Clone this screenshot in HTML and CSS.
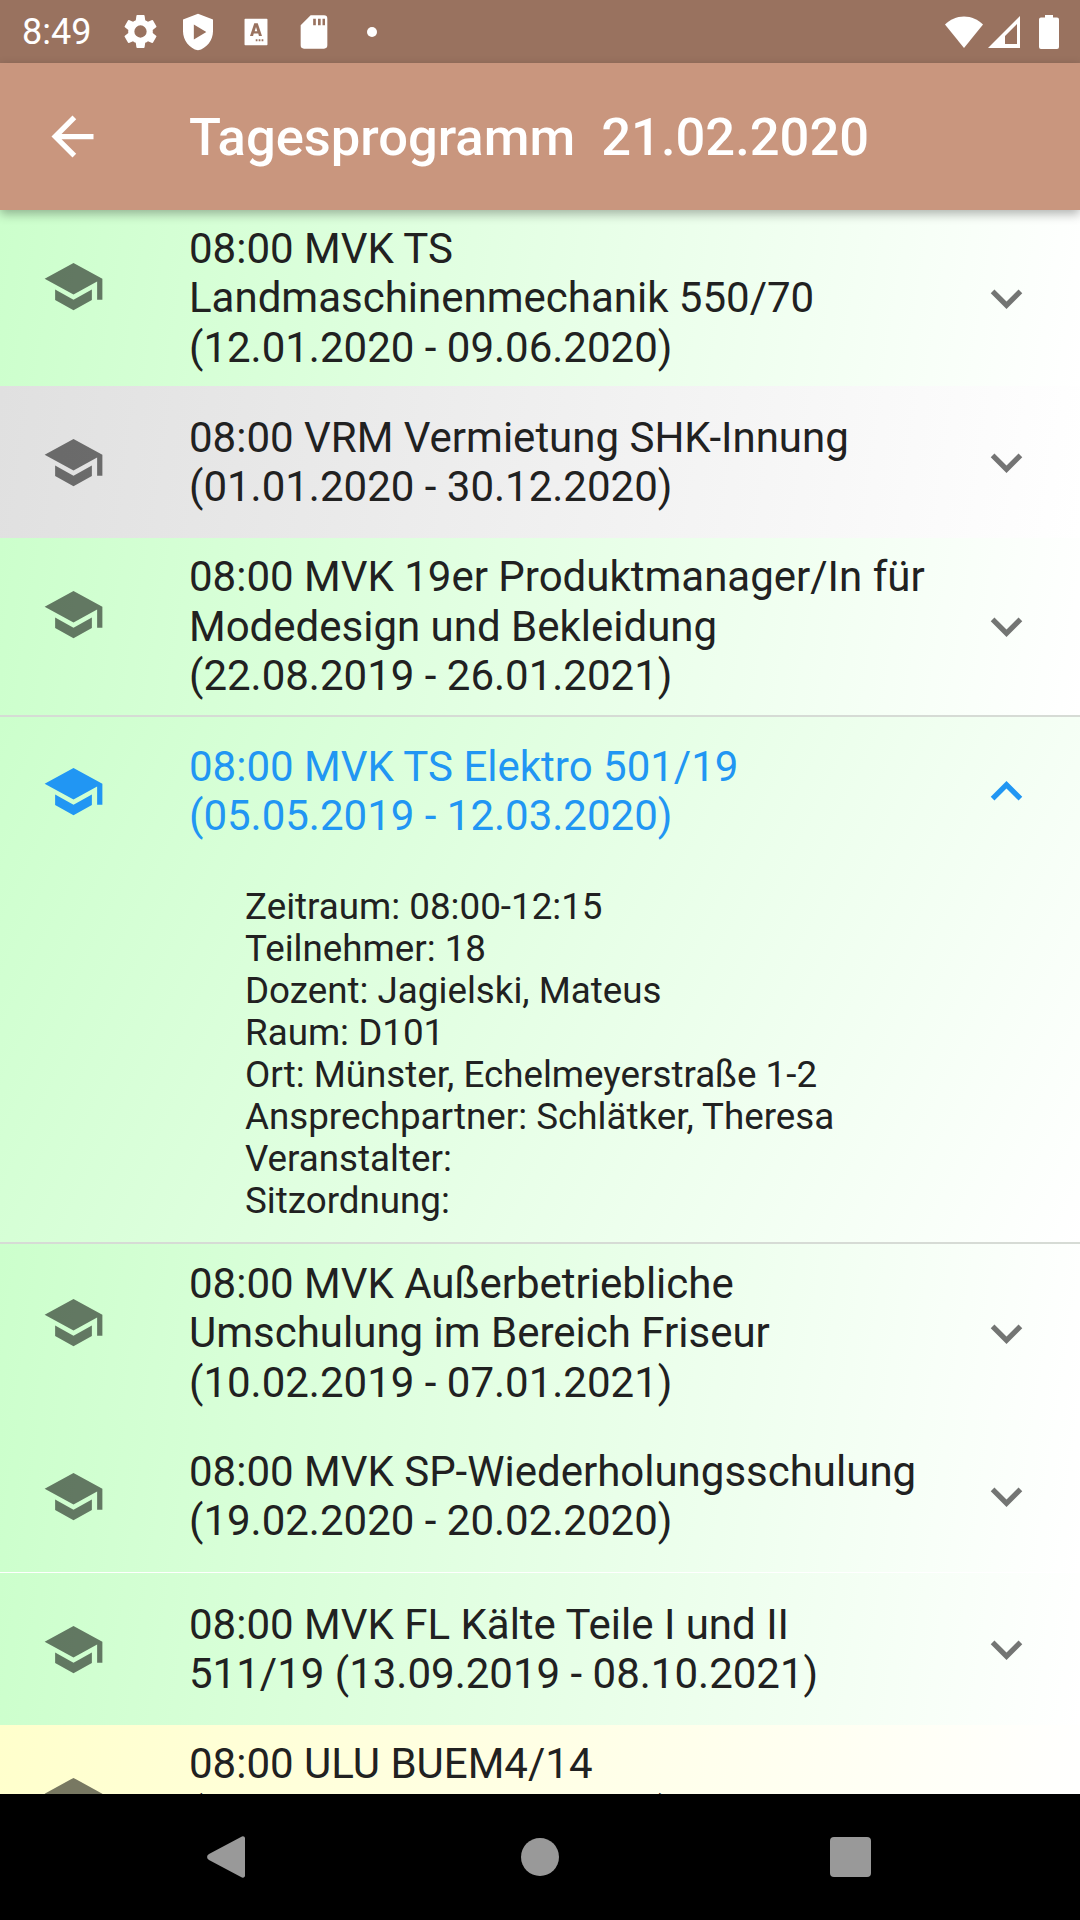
FILE: index.html
```html
<!DOCTYPE html>
<html>
  <head>
    <title>Tagesprogramm</title>
    <link rel="stylesheet" href="styles.css">
  </head>
  <body>
    <svg class="defs" width="0" height="0">
      <symbol id="cap" viewBox="0 0 24 24"><path d="M5 13.18v4L12 21l7-3.82v-4L12 17l-7-3.82zM12 3 1 9l11 6 9-4.91V17h2V9L12 3z"/></symbol>
      <symbol id="down" viewBox="0 0 24 24"><path d="M7.41 8.59 12 13.17l4.59-4.58L18 10l-6 6-6-6z"/></symbol>
      <symbol id="up" viewBox="0 0 24 24"><path d="M7.41 15.41 12 10.83l4.59 4.58L18 14l-6-6-6 6z"/></symbol>
    </svg>
    <div class="statusBar">
      <span class="clock">8:49</span>
      <div class="statusLeft">
        <svg class="gearIcon" viewBox="0 0 24 24"><path d="M19.14 12.94c.04-.3.06-.61.06-.94s-.02-.64-.07-.94l2.03-1.58a.49.49 0 0 0 .12-.61l-1.92-3.32a.49.49 0 0 0-.59-.22l-2.39.96a7 7 0 0 0-1.62-.94l-.36-2.54a.48.48 0 0 0-.48-.41h-3.84a.47.47 0 0 0-.47.41l-.36 2.54c-.59.24-1.13.57-1.62.94l-2.39-.96a.48.48 0 0 0-.59.22L2.74 8.87a.47.47 0 0 0 .12.61l2.03 1.58c-.05.3-.09.63-.09.94s.02.64.07.94l-2.03 1.58a.49.49 0 0 0-.12.61l1.92 3.32c.12.22.37.29.59.22l2.39-.96c.5.38 1.03.7 1.62.94l.36 2.54c.05.24.24.41.48.41h3.84c.24 0 .44-.17.47-.41l.36-2.54c.59-.24 1.13-.56 1.62-.94l2.39.96c.22.08.47 0 .59-.22l1.92-3.32a.47.47 0 0 0-.12-.61l-2.01-1.58zM12 15.6A3.6 3.6 0 1 1 12 8.4a3.6 3.6 0 0 1 0 7.2z"/></svg>
        <svg class="shieldIcon" viewBox="0 0 24 24"><path fill-rule="evenodd" d="M12 1 3 4.5v7c0 5.4 3.8 10.3 9 11.5 5.2-1.2 9-6.1 9-11.5v-7L12 1zM9.500 7.500v9l7.500-4.500-7.500-4.500z"/></svg>
        <svg class="fontIcon" viewBox="0 0 24 24"><path fill-rule="evenodd" d="M4 2h16a.6.6 0 0 1 .6.6v18.800a.6.6 0 0 1-.6.6H4a.6.6 0 0 1-.6-.6V2.600A.6.6 0 0 1 4 2zm6.700 3.500-3.200 9.500h2.300l.5-1.800h3.400l.5 1.800h2.300l-3.200-9.500h-2.600zm1.300 2.700 1 3.300h-2l1-3.300zM14 17.500v1.500h1.300v-1.500H14zm2.200 0v1.500h1.300v-1.500h-1.300zm-4.400 0v1.500h1.300v-1.500h-1.300z"/></svg>
        <svg class="cardIcon" viewBox="0 0 24 24"><path fill-rule="evenodd" d="M10 2h8a2 2 0 0 1 2 2v16a2 2 0 0 1-2 2H6a2 2 0 0 1-2-2V8l6-6zm1.500 2v4h1.600V4h-1.600zm2.900 0v4H16V4h-1.600zm2.700 0v4h1.500V4h-1.500z"/></svg>
        <span class="dot"></span>
      </div>
      <div class="statusRight">
        <svg class="wifi" viewBox="0 0 40 34"><path d="M20 33 1 9.500C6 4.500 12.500 1.500 20 1.500s14 3 19 8L20 33z"/></svg>
        <svg class="signal" viewBox="0 0 32 32"><path fill-rule="evenodd" d="M32 0v32H0L32 0zM29 8 17 20v8h12V8z"/></svg>
        <svg class="battery" viewBox="0 0 20 34"><path d="M6 0h8v2.500h4a2 2 0 0 1 2 2V32a2 2 0 0 1-2 2H2a2 2 0 0 1-2-2V4.500a2 2 0 0 1 2-2h4V0z"/></svg>
      </div>
    </div>
    <div class="appBar">
      <svg class="backIcon" viewBox="0 0 24 24"><path d="M20 11H7.830l5.590-5.590L12 4l-8 8 8 8 1.410-1.410L7.830 13H20v-2z"/></svg>
      <span class="appTitle">Tagesprogramm&nbsp; 21.02.2020</span>
    </div>
    <div class="list">
      <div class="tile green threeLines">
        <svg class="leadIcon"><use href="#cap"/></svg>
        <div class="tileText">08:00 MVK TS<br>Landmaschinenmechanik 550/70<br>(12.01.2020 - 09.06.2020)</div>
        <svg class="chevron"><use href="#down"/></svg>
      </div>
      <div class="tile grey twoLines">
        <svg class="leadIcon"><use href="#cap"/></svg>
        <div class="tileText">08:00 VRM Vermietung SHK-Innung<br>(01.01.2020 - 30.12.2020)</div>
        <svg class="chevron"><use href="#down"/></svg>
      </div>
      <div class="tile green threeLines beforeOpen">
        <svg class="leadIcon"><use href="#cap"/></svg>
        <div class="tileText">08:00 MVK 19er Produktmanager/In für<br>Modedesign und Bekleidung<br>(22.08.2019 - 26.01.2021)</div>
        <svg class="chevron"><use href="#down"/></svg>
      </div>
      <div class="openTile">
        <div class="tile open">
          <svg class="leadIcon"><use href="#cap"/></svg>
          <div class="tileText">08:00 MVK TS Elektro 501/19<br>(05.05.2019 - 12.03.2020)</div>
          <svg class="chevron"><use href="#up"/></svg>
        </div>
        <div class="details">
          Zeitraum: 08:00-12:15<br>
          Teilnehmer: 18<br>
          Dozent: Jagielski, Mateus<br>
          Raum: D101<br>
          Ort: Münster, Echelmeyerstraße 1-2<br>
          Ansprechpartner: Schlätker, Theresa<br>
          Veranstalter:<br>
          Sitzordnung:
        </div>
      </div>
      <div class="tile green threeLines afterOpen">
        <svg class="leadIcon"><use href="#cap"/></svg>
        <div class="tileText">08:00 MVK Außerbetriebliche<br>Umschulung im Bereich Friseur<br>(10.02.2019 - 07.01.2021)</div>
        <svg class="chevron"><use href="#down"/></svg>
      </div>
      <div class="tile green twoLines">
        <svg class="leadIcon"><use href="#cap"/></svg>
        <div class="tileText">08:00 MVK SP-Wiederholungsschulung<br>(19.02.2020 - 20.02.2020)</div>
        <svg class="chevron"><use href="#down"/></svg>
      </div>
      <div class="tile green twoLines gapAbove">
        <svg class="leadIcon"><use href="#cap"/></svg>
        <div class="tileText">08:00 MVK FL Kälte Teile I und II<br>511/19 (13.09.2019 - 08.10.2021)</div>
        <svg class="chevron"><use href="#down"/></svg>
      </div>
      <div class="tile yellow threeLines">
        <svg class="leadIcon"><use href="#cap"/></svg>
        <div class="tileText">08:00 ULU BUEM4/14<br>(01.08.2014 - 31.07.2020)<br>&nbsp;</div>
        <svg class="chevron"><use href="#down"/></svg>
      </div>
    </div>
    <div class="navBar">
      <svg class="navBack" viewBox="0 0 38 42"><path d="M34 1c2-1.500 4-.5 4 1.500v37c0 2-2 3-4 1.500L2 24c-2.500-1.500-2.500-4.500 0-6L34 1z"/></svg>
      <span class="navHome"></span>
      <span class="navSquare"></span>
    </div>
  </body>
</html>
```
FILE: styles.css
```css
* {
  box-sizing: border-box;
}
body {
  margin: 0;
  width: 1080px;
  height: 1920px;
  overflow: hidden;
  display: flex;
  flex-direction: column;
  font-family: Roboto, sans-serif;
  background-color: #fff;
}
.defs {
  position: absolute;
}
.statusBar {
  height: 63px;
  flex: none;
  display: flex;
  align-items: center;
  padding: 0 21px 0 22px;
  background-color: #99725f;
  color: #fff;
}
.clock {
  font-size: 36px;
  width: 97.500px;
}
.statusLeft {
  display: flex;
  align-items: center;
}
.statusLeft svg {
  fill: #fff;
}
.gearIcon {
  width: 41px;
  height: 41px;
}
.shieldIcon {
  width: 40px;
  height: 40px;
  margin-left: 17.500px;
}
.fontIcon {
  width: 32px;
  height: 32px;
  margin-left: 21.500px;
}
.cardIcon {
  width: 40px;
  height: 40px;
  margin-left: 22.500px;
}
.dot {
  width: 10px;
  height: 10px;
  border-radius: 50%;
  background-color: #fff;
  margin-left: 33px;
}
.statusRight {
  margin-left: auto;
  display: flex;
  align-items: center;
}
.statusRight svg {
  fill: #fff;
}
.wifi {
  width: 40px;
  height: 34px;
}
.signal {
  width: 32px;
  height: 32px;
  margin-left: 4px;
}
.battery {
  width: 20px;
  height: 34px;
  margin-left: 19px;
}
.appBar {
  height: 147px;
  flex: none;
  display: flex;
  align-items: center;
  padding-left: 41px;
  background-color: #c9967e;
  color: #fff;
  box-shadow: 0 4px 10px rgba(0, 0, 0, 0.3);
  position: relative;
  z-index: 2;
}
.backIcon {
  width: 63px;
  height: 63px;
  fill: #fff;
  margin-right: 85px;
}
.appTitle {
  font-size: 52.500px;
  font-weight: 500;
}
.list {
  flex: 1;
  overflow: hidden;
}
.tile {
  display: flex;
  align-items: center;
  padding-left: 42px;
}
.threeLines {
  height: 176px;
}
.twoLines {
  height: 152px;
}
.beforeOpen {
  height: 177px;
}
.afterOpen {
  padding-top: 2px;
}
.gapAbove {
  margin-top: 1px;
}
.green.threeLines { background-image: linear-gradient(99deg, #ccffcc, #fff); }
.green.twoLines { background-image: linear-gradient(98deg, #ccffcc, #fff); }
.grey.twoLines { background-image: linear-gradient(98deg, #e0e0e0, #fff); }
.yellow.threeLines { background-image: linear-gradient(99deg, #ffffcc, #fff); }
.leadIcon {
  width: 63px;
  height: 63px;
  flex: none;
  fill: rgba(0, 0, 0, 0.53);
  margin-right: 84px;
  align-self: flex-start;
  margin-top: 45px;
}
.tileText {
  flex: 1;
  font-size: 42px;
  line-height: 49.500px;
  color: #212121;
}
.chevron {
  width: 63px;
  height: 63px;
  flex: none;
  fill: rgba(0, 0, 0, 0.54);
  margin-right: 42px;
}
.openTile {
  height: 529px;
  border-top: 2px solid #d6dbd5;
  border-bottom: 2px solid #d6dbd5;
  background-image: linear-gradient(116deg, #ccffcc, #fff);
}
.open {
  height: 148px;
}
.open .leadIcon {
  fill: #2196f3;
  margin-top: 43px;
}
.open .chevron {
  fill: #2196f3;
}
.open .tileText {
  color: #2196f3;
}
.details {
  padding-left: 245px;
  margin-top: 21px;
  font-size: 36.750px;
  line-height: 42px;
  color: #212121;
}
.navBar {
  height: 126px;
  flex: none;
  background-color: #000;
  display: flex;
  align-items: center;
  padding-left: 207px;
}
.navBack {
  width: 38px;
  height: 42px;
  fill: #999;
}
.navHome {
  width: 38px;
  height: 38px;
  border-radius: 50%;
  background-color: #999;
  margin-left: 276px;
}
.navSquare {
  width: 41px;
  height: 40px;
  border-radius: 4px;
  background-color: #999;
  margin-left: 271px;
}
```
